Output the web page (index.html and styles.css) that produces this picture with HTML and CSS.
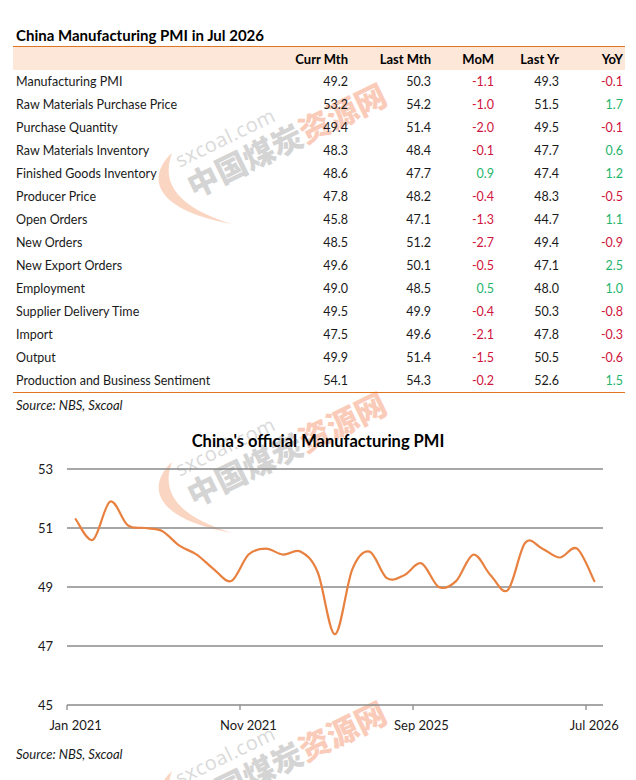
FILE: index.html
```html
<!DOCTYPE html>
<html lang="en">
<head>
<meta charset="utf-8">
<title>China Manufacturing PMI</title>
<link rel="stylesheet" href="styles.css">
</head>
<body>
<div class="page">
  <svg class="watermarks" width="636" height="780" viewBox="0 0 636 780" aria-hidden="true">
    <defs>
      <g id="wm">
        <path class="wm-arc" d="M172 462 C148 484 150 518 232 533 C180 517 160 494 172 462 Z"/>
        <g transform="translate(287 450) rotate(-26)">
          <text class="wm-site" x="-54" y="-23" text-anchor="middle">sxcoal.com</text>
          <text class="wm-cn" x="0" y="11" text-anchor="middle"><tspan class="wm-grey">中国煤炭</tspan><tspan class="wm-orange">资源网</tspan></text>
        </g>
      </g>
    </defs>
    <use href="#wm" transform="translate(0 -309)"/>
    <use href="#wm"/>
    <use href="#wm" transform="translate(0 309)"/>
  </svg>

  <section class="table-section">
    <h1 class="table-title">China Manufacturing PMI in Jul 2026</h1>
    <table class="pmi-table">
      <colgroup>
        <col class="c-name"><col class="c-curr"><col class="c-last"><col class="c-mom"><col class="c-yr"><col class="c-yoy">
      </colgroup>
      <thead>
        <tr><th class="name"></th><th>Curr Mth</th><th>Last Mth</th><th>MoM</th><th>Last Yr</th><th>YoY</th></tr>
      </thead>
      <tbody>
        <tr><td class="name">Manufacturing PMI</td><td>49.2</td><td>50.3</td><td class="neg">-1.1</td><td>49.3</td><td class="neg">-0.1</td></tr>
        <tr><td class="name">Raw Materials Purchase Price</td><td>53.2</td><td>54.2</td><td class="neg">-1.0</td><td>51.5</td><td class="pos">1.7</td></tr>
        <tr><td class="name">Purchase Quantity</td><td>49.4</td><td>51.4</td><td class="neg">-2.0</td><td>49.5</td><td class="neg">-0.1</td></tr>
        <tr><td class="name">Raw Materials Inventory</td><td>48.3</td><td>48.4</td><td class="neg">-0.1</td><td>47.7</td><td class="pos">0.6</td></tr>
        <tr><td class="name">Finished Goods Inventory</td><td>48.6</td><td>47.7</td><td class="pos">0.9</td><td>47.4</td><td class="pos">1.2</td></tr>
        <tr><td class="name">Producer Price</td><td>47.8</td><td>48.2</td><td class="neg">-0.4</td><td>48.3</td><td class="neg">-0.5</td></tr>
        <tr><td class="name">Open Orders</td><td>45.8</td><td>47.1</td><td class="neg">-1.3</td><td>44.7</td><td class="pos">1.1</td></tr>
        <tr><td class="name">New Orders</td><td>48.5</td><td>51.2</td><td class="neg">-2.7</td><td>49.4</td><td class="neg">-0.9</td></tr>
        <tr><td class="name">New Export Orders</td><td>49.6</td><td>50.1</td><td class="neg">-0.5</td><td>47.1</td><td class="pos">2.5</td></tr>
        <tr><td class="name">Employment</td><td>49.0</td><td>48.5</td><td class="pos">0.5</td><td>48.0</td><td class="pos">1.0</td></tr>
        <tr><td class="name">Supplier Delivery Time</td><td>49.5</td><td>49.9</td><td class="neg">-0.4</td><td>50.3</td><td class="neg">-0.8</td></tr>
        <tr><td class="name">Import</td><td>47.5</td><td>49.6</td><td class="neg">-2.1</td><td>47.8</td><td class="neg">-0.3</td></tr>
        <tr><td class="name">Output</td><td>49.9</td><td>51.4</td><td class="neg">-1.5</td><td>50.5</td><td class="neg">-0.6</td></tr>
        <tr><td class="name">Production and Business Sentiment</td><td>54.1</td><td>54.3</td><td class="neg">-0.2</td><td>52.6</td><td class="pos">1.5</td></tr>
      </tbody>
    </table>
    <p class="source">Source: NBS, Sxcoal</p>
  </section>

  <section class="chart-section">
    <h2 class="chart-title">China's official Manufacturing PMI</h2>
    <svg class="chart" width="636" height="285" viewBox="0 0 636 285">
      <g class="grid">
        <line x1="67" y1="16" x2="603" y2="16"/>
        <line x1="67" y1="75" x2="603" y2="75"/>
        <line x1="67" y1="134" x2="603" y2="134"/>
        <line x1="67" y1="193" x2="603" y2="193"/>
        <line x1="67" y1="252" x2="603" y2="252"/>
        <line x1="67" y1="252" x2="67" y2="257"/>
        <line x1="240" y1="252" x2="240" y2="257"/>
        <line x1="413" y1="252" x2="413" y2="257"/>
        <line x1="586" y1="252" x2="586" y2="257"/>
      </g>
      <g class="ylabels">
        <text x="53" y="20.5">53</text>
        <text x="53" y="79.5">51</text>
        <text x="53" y="138.5">49</text>
        <text x="53" y="197.5">47</text>
        <text x="53" y="256.5">45</text>
      </g>
      <g class="xlabels">
        <text x="75.6" y="276.5">Jan 2021</text>
        <text x="248.5" y="276.5">Nov 2021</text>
        <text x="421.4" y="276.5">Sep 2025</text>
        <text x="594.3" y="276.5">Jul 2026</text>
      </g>
      <path id="pmi-line" class="series" d=""/>
    </svg>
    <p class="source">Source: NBS, Sxcoal</p>
  </section>
</div>
<script src="script.js"></script>
</body>
</html>
```

FILE: styles.css
```css
html, body {
  margin: 0;
  padding: 0;
  background: #ffffff;
}

body {
  font-family: "Lato", "Noto Sans", sans-serif;
  color: #1a1a1a;
}

.page {
  position: relative;
  width: 636px;
  height: 780px;
  overflow: hidden;
}

.watermarks {
  position: absolute;
  left: 0;
  top: 0;
  pointer-events: none;
  z-index: 0;
}

.wm-arc {
  fill: #f9cbb2;
  stroke: none;
  opacity: 0.8;
}

.wm-site {
  font-family: "Open Sans", sans-serif;
  font-size: 20px;
  fill: #dadada;
  letter-spacing: 0.5px;
}

.wm-cn {
  font-family: "Noto Sans CJK SC", sans-serif;
  font-weight: 900;
  font-size: 31px;
}

.wm-grey { fill: #d4d4d4; }
.wm-orange { fill: #fbcbb9; }

.table-section,
.chart-section {
  position: relative;
  z-index: 1;
}

.table-section {
  padding: 24px 11px 0 13px;
}

.table-title {
  margin: 0;
  padding-left: 3px;
  font-size: 15px;
  font-weight: 700;
  line-height: 22px;
  color: #000;
}

.pmi-table {
  width: 612px;
  table-layout: fixed;
  border-collapse: collapse;
  font-size: 12.5px;
}

.c-name { width: 277px; }
.c-curr { width: 60px; }
.c-last { width: 83px; }
.c-mom { width: 63px; }
.c-yr { width: 65px; }
.c-yoy { width: 64px; }

.pmi-table thead tr {
  background: #fce7d9;
  border-top: 1.5px solid #e2731f;
}

.pmi-table th {
  height: 23px;
  padding: 0 2px 0 0;
  text-align: right;
  font-size: 13px;
  font-weight: 700;
  color: #000;
}

.pmi-table td {
  height: 23px;
  padding: 0 2px 0 0;
  text-align: right;
  white-space: nowrap;
}

.pmi-table .name {
  text-align: left;
  padding-left: 3px;
}

.pmi-table tbody tr:last-child td {
  border-bottom: 1px solid #e2731f;
}

.neg { color: #d0143c; }
.pos { color: #1fb56c; }

.source {
  margin: 0;
  padding: 1px 3px;
  font-size: 13px;
  font-style: italic;
  line-height: 22px;
}

.chart-section {
  padding-top: 12px;
}

.chart-title {
  margin: 0;
  text-align: center;
  font-size: 16.5px;
  font-weight: 700;
  line-height: 24px;
  color: #000;
}

.chart {
  display: block;
}

.grid line {
  stroke: #8a8a8a;
  stroke-width: 1.3;
}

.ylabels text {
  font-size: 13px;
  fill: #1a1a1a;
  text-anchor: end;
}

.xlabels text {
  font-size: 13px;
  fill: #1a1a1a;
  text-anchor: middle;
}

.series {
  fill: none;
  stroke: #e8813f;
  stroke-width: 2.2;
  stroke-linejoin: round;
  stroke-linecap: round;
}

.chart-section .source {
  margin-top: 4px;
  padding-left: 16px;
}
```

FILE: script.js
```js
(function () {
  var data = [51.3, 50.6, 51.9, 51.1, 51.0, 50.9, 50.4, 50.1, 49.6, 49.2,
              50.1, 50.3, 50.1, 50.2, 49.5, 47.4, 49.6, 50.2, 49.3, 49.4,
              49.8, 49.0, 49.2, 50.1, 49.4, 48.9, 50.5, 50.3, 50.0, 50.3, 49.2];
  var n = data.length;
  var w = 536 / n;
  var pts = data.map(function (v, i) {
    return [67 + (i + 0.5) * w, 16 + (53 - v) * 29.5];
  });
  function f(x) { return x.toFixed(2); }
  var d = "M" + f(pts[0][0]) + " " + f(pts[0][1]);
  for (var i = 0; i < n - 1; i++) {
    var p0 = pts[i > 0 ? i - 1 : i];
    var p1 = pts[i];
    var p2 = pts[i + 1];
    var p3 = pts[i + 2 < n ? i + 2 : i + 1];
    var c1x = p1[0] + (p2[0] - p0[0]) / 6;
    var c1y = p1[1] + (p2[1] - p0[1]) / 6;
    var c2x = p2[0] - (p3[0] - p1[0]) / 6;
    var c2y = p2[1] - (p3[1] - p1[1]) / 6;
    d += " C" + f(c1x) + " " + f(c1y) + " " + f(c2x) + " " + f(c2y) + " " + f(p2[0]) + " " + f(p2[1]);
  }
  document.getElementById("pmi-line").setAttribute("d", d);
})();
```
